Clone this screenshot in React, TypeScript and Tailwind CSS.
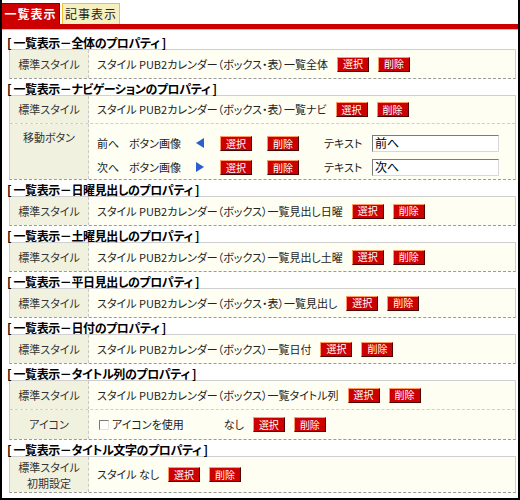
import React from "react";

function Btn({ t }: { t: string }) {
  return (
    <span className="inline-flex h-[15px] w-[32px] shrink-0 items-center justify-center border border-t-[#ff9966] border-l-[#ff9966] border-r-[#4a0000] border-b-[#4a0000] bg-[#cc0000] text-[10px] leading-none text-white">
      {t}
    </span>
  );
}

function Btns() {
  return (
    <span className="ml-[9px] flex items-center gap-[9px]">
      <Btn t="選択" />
      <Btn t="削除" />
    </span>
  );
}

function Section({
  title,
  children,
  first,
}: {
  title: string;
  children: React.ReactNode;
  first?: boolean;
}) {
  return (
    <div className={first ? "" : "mt-[4px]"}>
      <div className="h-[12px] whitespace-nowrap pl-[5px] text-[12px] font-bold leading-[12px] tracking-[-0.4px] text-black">
        [ {title} ]
      </div>
      <div className="ml-[7px] mr-[2px] border border-[#cfcfcf] border-b-[#9a9a9a] [border-bottom-style:dashed] bg-[#fefef3]">
        {children}
      </div>
    </div>
  );
}

function Row({
  label,
  h,
  sep,
  top,
  children,
}: {
  label: React.ReactNode;
  h: string;
  sep?: boolean;
  top?: boolean;
  children: React.ReactNode;
}) {
  return (
    <div className={`flex ${h} ${sep ? "border-t border-dashed border-[#cfcfcf]" : ""}`}>
      <div
        className={`flex w-[79px] shrink-0 justify-center border-r border-dashed border-[#c8c8c8] bg-[#f1f1df] text-[11px] text-[#333] ${
          top ? "items-start pt-[5px]" : "items-center"
        }`}
      >
        {label}
      </div>
      <div className="flex flex-1 items-center whitespace-nowrap pl-[8px] text-[11px] text-[#222]">
        {children}
      </div>
    </div>
  );
}

function Tri({ dir }: { dir: "l" | "r" }) {
  return (
    <svg width="8" height="10" viewBox="0 0 8 10">
      {dir === "l" ? (
        <polygon points="8,0 8,10 0,5" fill="#2a5fd0" />
      ) : (
        <polygon points="0,0 0,10 8,5" fill="#2a5fd0" />
      )}
    </svg>
  );
}

function NavRow({ a, dir, val }: { a: string; dir: "l" | "r"; val: string }) {
  return (
    <div className="grid h-[24px] grid-cols-[32px_67px_24px_47px_57px_48px_127px] items-center">
      <span>{a}</span>
      <span>ボタン画像</span>
      <span className="flex items-center">
        <Tri dir={dir} />
      </span>
      <span>
        <Btn t="選択" />
      </span>
      <span>
        <Btn t="削除" />
      </span>
      <span>テキスト</span>
      <span className="flex h-[17px] items-center border border-t-[#7a7a7a] border-l-[#7a7a7a] border-r-[#d8d8d8] border-b-[#d8d8d8] bg-white pl-[2px] text-[12px] text-black">
        {val}
      </span>
    </div>
  );
}

export default function App() {
  return (
    <div className="h-[500px] w-[520px] overflow-hidden border-x-2 border-b-2 border-black bg-white font-['Noto_Sans_CJK_JP','Noto_Sans',sans-serif] [font-feature-settings:'palt']">
      <div className="flex gap-[2px] pt-[3px]">
        <div className="flex h-[21px] w-[58px] items-center justify-center whitespace-nowrap border-t border-r border-[#8a0000] bg-[#cc0000] text-[12px] font-bold tracking-[1px] text-white">
          一覧表示
        </div>
        <div className="flex h-[21px] w-[58px] items-center justify-center whitespace-nowrap border-x border-t border-[#f0c030] bg-[#f6f0c0] text-[12px] tracking-[1px] text-[#222]">
          記事表示
        </div>
      </div>
      <div className="h-[5px] bg-[#cc0000]" />
      <div className="h-[1px] bg-[#c4c4c4]" />
      <div className="pt-[7px]">
        <Section title="一覧表示－全体のプロパティ" first>
          <Row label="標準スタイル" h="h-[28px]">
            スタイル PUB2カレンダー（ボックス・表）一覧全体
            <Btns />
          </Row>
        </Section>
        <Section title="一覧表示－ナビゲーションのプロパティ">
          <Row label="標準スタイル" h="h-[27px]">
            スタイル PUB2カレンダー（ボックス・表）一覧ナビ
            <Btns />
          </Row>
          <Row label="移動ボタン" h="h-[56px]" sep top>
            <div className="flex flex-col self-start pt-[7px]">
              <NavRow a="前へ" dir="l" val="前へ" />
              <NavRow a="次へ" dir="r" val="次へ" />
            </div>
          </Row>
        </Section>
        <Section title="一覧表示－日曜見出しのプロパティ">
          <Row label="標準スタイル" h="h-[28px]">
            スタイル PUB2カレンダー（ボックス）一覧見出し日曜
            <Btns />
          </Row>
        </Section>
        <Section title="一覧表示－土曜見出しのプロパティ">
          <Row label="標準スタイル" h="h-[28px]">
            スタイル PUB2カレンダー（ボックス）一覧見出し土曜
            <Btns />
          </Row>
        </Section>
        <Section title="一覧表示－平日見出しのプロパティ">
          <Row label="標準スタイル" h="h-[28px]">
            スタイル PUB2カレンダー（ボックス・表）一覧見出し
            <Btns />
          </Row>
        </Section>
        <Section title="一覧表示－日付のプロパティ">
          <Row label="標準スタイル" h="h-[28px]">
            スタイル PUB2カレンダー（ボックス）一覧日付
            <Btns />
          </Row>
        </Section>
        <Section title="一覧表示－タイトル列のプロパティ">
          <Row label="標準スタイル" h="h-[28px]">
            スタイル PUB2カレンダー（ボックス）一覧タイトル列
            <Btns />
          </Row>
          <Row label="アイコン" h="h-[30px]" sep>
            <span className="ml-[2px] mr-[3px] inline-block h-[10px] w-[10px] border border-t-[#7a7a7a] border-l-[#7a7a7a] border-r-[#e4e4e4] border-b-[#e4e4e4] bg-white" />
            <span>アイコンを使用</span>
            <span className="ml-[40px]">なし</span>
            <Btns />
          </Row>
        </Section>
        <Section title="一覧表示－タイトル文字のプロパティ">
          <Row
            label={
              <div className="flex flex-col items-center">
                <div className="h-[16px] leading-[16px]">標準スタイル</div>
                <div className="h-[16px] leading-[16px]">初期設定</div>
              </div>
            }
            h="h-[35px]"
          >
            スタイル なし
            <Btns />
          </Row>
        </Section>
      </div>
    </div>
  );
}
